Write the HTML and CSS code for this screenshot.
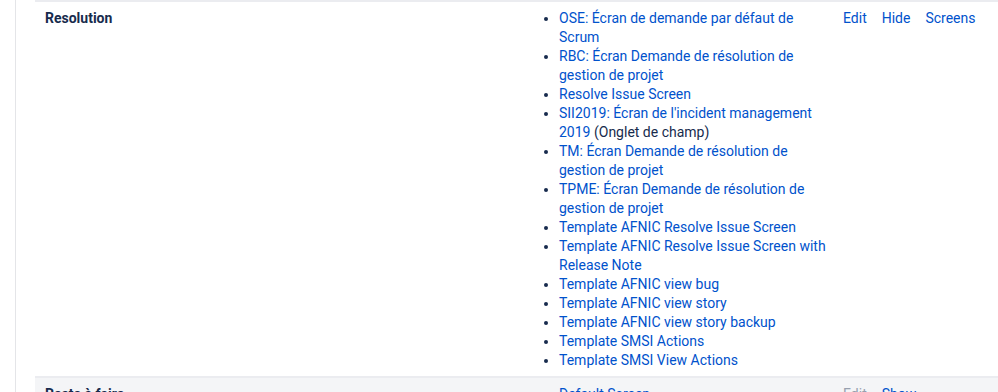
FILE: index.html
```html
<!DOCTYPE html>
<html lang="fr">
<head>
<meta charset="utf-8">
<title>Fields</title>
<link rel="stylesheet" href="styles.css">
</head>
<body>
<div class="page">
  <div class="sidebar-edge"></div>
  <div class="table">
    <div class="row">
      <div class="cell name">Resolution</div>
      <div class="cell screens">
        <ul class="screen-list">
          <li><a href="#">OSE: Écran de demande par défaut de Scrum</a></li>
          <li><a href="#">RBC: Écran Demande de résolution de gestion de projet</a></li>
          <li><a href="#">Resolve Issue Screen</a></li>
          <li><a href="#">SII2019: Écran de l'incident management 2019</a> (Onglet de champ)</li>
          <li><a href="#">TM: Écran Demande de résolution de gestion de projet</a></li>
          <li><a href="#">TPME: Écran Demande de résolution de gestion de projet</a></li>
          <li><a href="#">Template AFNIC Resolve Issue Screen</a></li>
          <li><a href="#">Template AFNIC Resolve Issue Screen with Release Note</a></li>
          <li><a href="#">Template AFNIC view bug</a></li>
          <li><a href="#">Template AFNIC view story</a></li>
          <li><a href="#">Template AFNIC view story backup</a></li>
          <li><a href="#">Template SMSI Actions</a></li>
          <li><a href="#">Template SMSI View Actions</a></li>
        </ul>
      </div>
      <div class="cell actions">
        <a href="#">Edit</a>
        <a href="#">Hide</a>
        <a href="#">Screens</a>
      </div>
    </div>
    <div class="row hidden-row">
      <div class="cell name">Reste à faire</div>
      <div class="cell screens">
        <ul class="screen-list">
          <li><a href="#">Default Screen</a></li>
        </ul>
      </div>
      <div class="cell actions">
        <span class="disabled">Edit</span>
        <a href="#">Show</a>
      </div>
    </div>
  </div>
</div>
</body>
</html>
```
FILE: styles.css
```css
* { box-sizing: border-box; }
html, body {
  margin: 0;
  padding: 0;
  background: #ffffff;
  overflow: hidden;
}
body {
  font-family: Roboto, "Noto Sans", "Liberation Sans", sans-serif;
  font-size: 14px;
  line-height: 19px;
  color: #172b4d;
}
.page {
  display: flex;
  height: 392px;
}
.sidebar-edge {
  width: 16px;
  flex: none;
  border-right: 1px solid #e4e5e8;
  margin-right: 19px;
}
.table {
  flex: 1;
  display: flex;
  flex-direction: column;
}
.row {
  display: grid;
  grid-template-columns: 500px 298px 1fr;
  border-top: 2px solid #ebecf0;
  padding: 7px 0 6px;
}
.hidden-row {
  background: #f4f5f7;
}
.cell {
  padding: 0 10px;
}
.name {
  font-weight: 700;
}
.screens {
  padding-left: 0;
  padding-right: 0;
}
.screen-list {
  margin: 0;
  padding-left: 24px;
  list-style: disc;
}
a {
  color: #0052cc;
  text-decoration: none;
}
.actions {
  display: flex;
  gap: 15px;
  white-space: nowrap;
}
.disabled {
  color: #97a0af;
}
```
